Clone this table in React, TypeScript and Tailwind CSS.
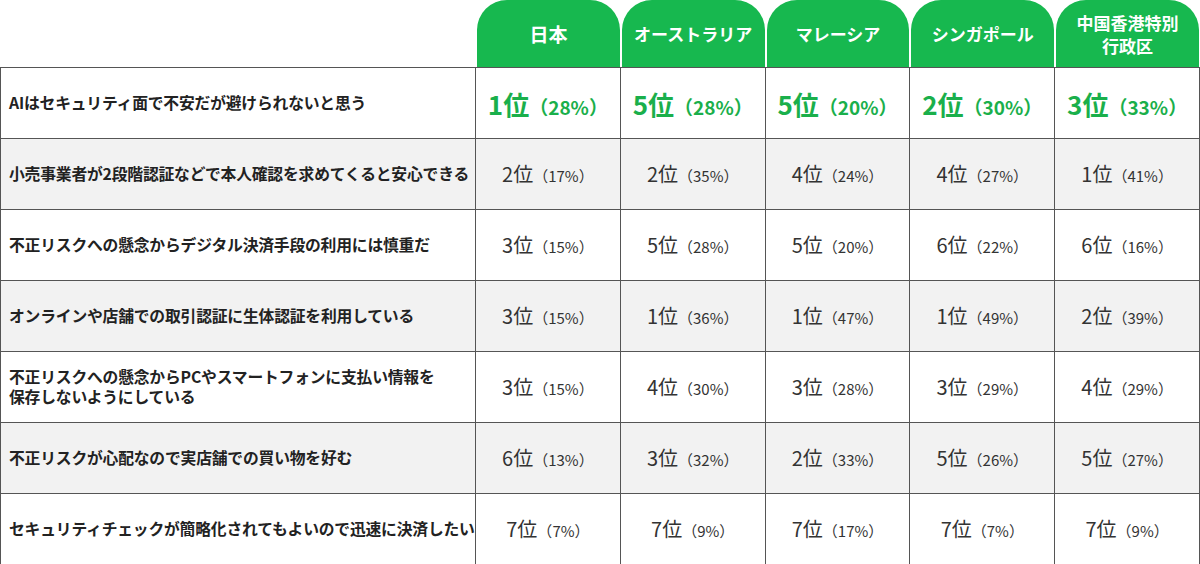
const COUNTRIES = ["日本", "オーストラリア", "マレーシア", "シンガポール", "中国香港特別\n行政区"];

type Row = { label: string; cells: [string, string][] };

const ROWS: Row[] = [
  {
    label: "AIはセキュリティ面で不安だが避けられないと思う",
    cells: [["1位", "28%"], ["5位", "28%"], ["5位", "20%"], ["2位", "30%"], ["3位", "33%"]],
  },
  {
    label: "小売事業者が2段階認証などで本人確認を求めてくると安心できる",
    cells: [["2位", "17%"], ["2位", "35%"], ["4位", "24%"], ["4位", "27%"], ["1位", "41%"]],
  },
  {
    label: "不正リスクへの懸念からデジタル決済手段の利用には慎重だ",
    cells: [["3位", "15%"], ["5位", "28%"], ["5位", "20%"], ["6位", "22%"], ["6位", "16%"]],
  },
  {
    label: "オンラインや店舗での取引認証に生体認証を利用している",
    cells: [["3位", "15%"], ["1位", "36%"], ["1位", "47%"], ["1位", "49%"], ["2位", "39%"]],
  },
  {
    label: "不正リスクへの懸念からPCやスマートフォンに支払い情報を\n保存しないようにしている",
    cells: [["3位", "15%"], ["4位", "30%"], ["3位", "28%"], ["3位", "29%"], ["4位", "29%"]],
  },
  {
    label: "不正リスクが心配なので実店舗での買い物を好む",
    cells: [["6位", "13%"], ["3位", "32%"], ["2位", "33%"], ["5位", "26%"], ["5位", "27%"]],
  },
  {
    label: "セキュリティチェックが簡略化されてもよいので迅速に決済したい",
    cells: [["7位", "7%"], ["7位", "9%"], ["7位", "17%"], ["7位", "7%"], ["7位", "9%"]],
  },
];

const FONT = "font-['Noto_Sans_CJK_JP','Noto_Sans',sans-serif]";

export default function App() {
  return (
    <div className={`w-[1200px] h-[564px] bg-white text-[#222] overflow-hidden ${FONT}`}>
      {/* Country tabs */}
      <div className="grid grid-cols-[476px_repeat(5,1fr)] h-[67px]">
        <div />
        {COUNTRIES.map((c, i) => (
          <div
            key={c}
            className={`mx-[1px] rounded-t-[30px] bg-[#17b84f] text-white font-bold leading-[23px] flex items-center justify-center text-center whitespace-pre-line ${
              i === 0 ? "text-[19px]" : "text-[17px]"
            }`}
          >
            {c}
          </div>
        ))}
      </div>

      {/* Table body */}
      <div className="border-t border-l border-[#555]">
        {ROWS.map((row, i) => {
          const first = i === 0;
          return (
            <div
              key={i}
              className={`grid grid-cols-[475px_repeat(5,1fr)] h-[71px] border-b border-[#555] ${
                i % 2 === 1 ? "bg-[#f2f2f2]" : "bg-white"
              }`}
            >
              <div className="border-r border-[#555] flex items-center pl-[8px] text-[15.8px] leading-[20px] font-bold whitespace-pre-line tracking-[-0.2px]">
                {row.label}
              </div>
              {row.cells.map(([rank, pct], j) => (
                <div
                  key={j}
                  className="border-r border-[#555] flex items-center justify-center"
                >
                  {first ? (
                    <span className="text-[#1aaf4b] font-bold flex items-baseline">
                      <span className="text-[26px]">{rank}</span>
                      <span className="text-[19px]">（{pct}）</span>
                    </span>
                  ) : (
                    <span className="flex items-baseline text-[#333]">
                      <span className="text-[20px]">{rank}</span>
                      <span className="text-[15px]">（{pct}）</span>
                    </span>
                  )}
                </div>
              ))}
            </div>
          );
        })}
      </div>
    </div>
  );
}
